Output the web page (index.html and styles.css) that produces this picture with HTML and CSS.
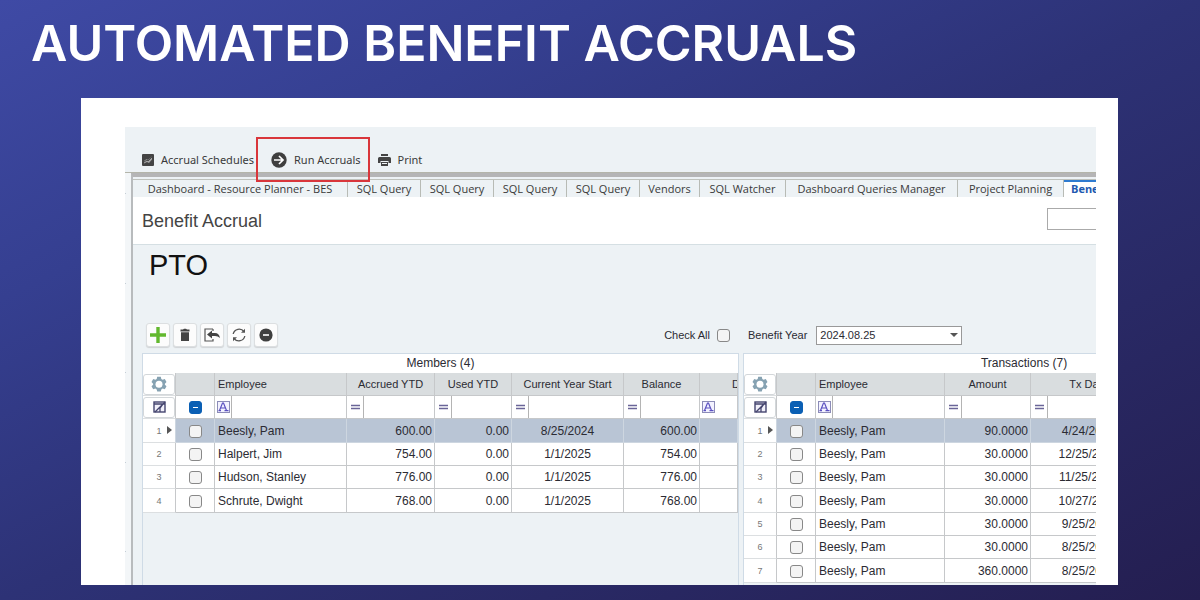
FILE: index.html
```
<!DOCTYPE html>
<html lang="en">
<head>
    <meta charset="UTF-8">
    <meta name="viewport" content="width=device-width, initial-scale=1.0">
    <title>Automated Benefit Accruals</title>
    <link rel="stylesheet" href="styles.css">
</head>
<body>
    <!-- shared icons -->
    <svg class="sprite" aria-hidden="true">
        <symbol id="gear" viewBox="0 0 16 16">
            <path d="M6.2 0.8h3.6l.5 2.2 1.3.8 2.2-.7 1.7 3-1.6 1.6v1l1.6 1.6-1.7 3-2.2-.7-1.3.8-.5 2.1H6.2l-.5-2.1-1.3-.8-2.2.7-1.7-3 1.6-1.6v-1L.5 6.1l1.700-3 2.200.7 1.300-.8z" fill="#86a2b2"/>
            <circle cx="8" cy="8.200" r="3.500" fill="#fff"/>
        </symbol>
        <symbol id="filter-edit" viewBox="0 0 13 12">
            <rect x="1" y="1" width="11" height="10" fill="#f1f0fa" stroke="#45456f" stroke-width="1.400"/>
            <path d="M1 3h11M3 3l7 0-3 4v4M2 11L12 1" fill="none" stroke="#45456f" stroke-width="1.300"/>
        </symbol>
        <symbol id="contains" viewBox="0 0 13 12">
            <rect x=".5" y=".5" width="12" height="11" fill="#f3f2ff" stroke="#8c8cb8"/>
            <path d="M2.500 9.500L5.500 2h1L9.500 9.500M4 7h4.200M1.500 9.700h2.500M7.500 9.700h4" fill="none" stroke="#5a50c0" stroke-width="1.200"/>
        </symbol>
        <symbol id="equals" viewBox="0 0 9 6">
            <path d="M0 1.500h9M0 4.500h9" stroke="#6a6598" stroke-width="1.300"/>
        </symbol>
    </svg>

    <h1 class="title">AUTOMATED BENEFIT ACCRUALS</h1>

    <div class="card">
        <div class="app">
            <div class="toolbar">
                <button class="tool">
                    <svg width="12" height="12" viewBox="0 0 12 12"><rect width="12" height="12" rx="1" fill="#444"/><path d="M2 9.500V7l2.500-2 1.500 1 4-3.500v3L7 9 5 8z" fill="#a5a5a5"/><path d="M2 8l3-2 1 1 4-4" fill="none" stroke="#333" stroke-width=".8"/></svg>
                    Accrual Schedules
                </button>
                <button class="tool tool-run">
                    <svg width="16" height="16" viewBox="0 0 16 16"><circle cx="8" cy="8" r="7.700" fill="#3f3f3f"/><path d="M3 8h9M8 4l4 4-4 4" fill="none" stroke="#fff" stroke-width="1.700"/></svg>
                    Run Accruals
                </button>
                <button class="tool">
                    <svg width="13" height="12" viewBox="0 0 13 12"><path d="M3 0h7v2H3zM1.500 3h10Q13 3 13 4.500V9h-2.500V7h-8v2H0V4.500Q0 3 1.500 3z" fill="#444"/><path d="M3 8h7v4H3z" fill="#444"/><path d="M4 9.500h5" stroke="#eef2f5"/></svg>
                    Print
                </button>
            </div>

            <div class="workspace">
                <div class="side"><i></i><i></i><i></i><i></i><i></i></div>
                <main class="main">
                    <nav class="tabs">
                        <a href="#">Dashboard - Resource Planner - BES</a>
                        <a href="#">SQL Query</a>
                        <a href="#">SQL Query</a>
                        <a href="#">SQL Query</a>
                        <a href="#">SQL Query</a>
                        <a href="#">Vendors</a>
                        <a href="#">SQL Watcher</a>
                        <a href="#">Dashboard Queries Manager</a>
                        <a href="#">Project Planning</a>
                        <a href="#" class="active">Benefit Accrual</a>
                    </nav>

                    <div class="page-head">
                        <h2>Benefit Accrual</h2>
                        <input type="text" class="search" aria-label="Search">
                    </div>

                    <div class="content">
                        <h3>PTO</h3>

                        <div class="columns">
                            <section class="column">
                                <div class="controls">
                                    <button class="icon-btn" aria-label="Add"><svg width="16" height="16" viewBox="0 0 16 16"><path d="M8 0v16M0 8h16" stroke="#62b82e" stroke-width="3.400"/></svg></button>
                                    <button class="icon-btn" aria-label="Delete"><svg width="12" height="14" viewBox="0 0 12 14"><path d="M1.500 1.500h2.500l1-.8h2l1 .8h2.500v2h-9zM2 4.200h8V13H2z" fill="#444"/></svg></button>
                                    <button class="icon-btn" aria-label="Revert"><svg width="16" height="14" viewBox="0 0 16 14"><path d="M9 1H1v12h8v-2M9 1v2" fill="none" stroke="#555" stroke-width="1.200"/><path d="M3 6.500L8 2.500V5h3q4 0 5 5-2-2-5-2H8v2.500z" fill="#444"/></svg></button>
                                    <button class="icon-btn" aria-label="Refresh"><svg width="14" height="14" viewBox="0 0 14 14"><path d="M1.200 6A6 6 0 0 1 12 3.700M12.800 8A6 6 0 0 1 2 10.300" fill="none" stroke="#555" stroke-width="1.300"/><path d="M13 .8v4H9zM1 13.200v-4h4z" fill="#555"/></svg></button>
                                    <button class="icon-btn" aria-label="Exclude"><svg width="14" height="14" viewBox="0 0 14 14"><circle cx="7" cy="7" r="6.600" fill="#3f3f3f"/><path d="M4 7h6" stroke="#fff" stroke-width="1.600"/></svg></button>
                                    <label class="check-all">Check All <input type="checkbox" class="check"></label>
                                </div>
                                <div class="panel">
                                    <table class="grid members">
                                        <caption>Members (4)</caption>
                                        <colgroup><col class="c-num"><col class="c-check"><col class="c-employee"><col class="c-accrued"><col class="c-used"><col class="c-start"><col class="c-balance"><col></colgroup>
                                        <thead>
                                            <tr class="head"><th class="num"><button class="cell-btn" aria-label="Settings"><svg width="16" height="16"><use href="#gear"/></svg></button></th><th></th><th class="left">Employee</th><th>Accrued YTD</th><th>Used YTD</th><th>Current Year Start</th><th>Balance</th><th class="cut">D</th></tr>
                                            <tr class="filter"><td class="num"><button class="cell-btn" aria-label="Edit filter"><svg width="13" height="12"><use href="#filter-edit"/></svg></button></td><td class="center"><input type="checkbox" class="check partial" aria-label="Select all members"></td>
                                                <td><div class="field text"><svg width="13" height="12"><use href="#contains"/></svg><input type="text" aria-label="Filter employee"></div></td>
                                                <td><div class="field"><svg width="9" height="6"><use href="#equals"/></svg><input type="text" aria-label="Filter accrued"></div></td>
                                                <td><div class="field"><svg width="9" height="6"><use href="#equals"/></svg><input type="text" aria-label="Filter used"></div></td>
                                                <td><div class="field"><svg width="9" height="6"><use href="#equals"/></svg><input type="text" aria-label="Filter year start"></div></td>
                                                <td><div class="field"><svg width="9" height="6"><use href="#equals"/></svg><input type="text" aria-label="Filter balance"></div></td>
                                                <td><div class="field text"><svg width="13" height="12"><use href="#contains"/></svg></div></td></tr>
                                        </thead>
                                        <tbody>
                                            <tr class="selected"><td class="num current">1</td><td class="center"><input type="checkbox" class="check" aria-label="Beesly, Pam"></td><td>Beesly, Pam</td><td class="right">600.00</td><td class="right">0.00</td><td class="center">8/25/2024</td><td class="right">600.00</td><td></td></tr>
                                            <tr><td class="num">2</td><td class="center"><input type="checkbox" class="check" aria-label="Halpert, Jim"></td><td>Halpert, Jim</td><td class="right">754.00</td><td class="right">0.00</td><td class="center">1/1/2025</td><td class="right">754.00</td><td></td></tr>
                                            <tr><td class="num">3</td><td class="center"><input type="checkbox" class="check" aria-label="Hudson, Stanley"></td><td>Hudson, Stanley</td><td class="right">776.00</td><td class="right">0.00</td><td class="center">1/1/2025</td><td class="right">776.00</td><td></td></tr>
                                            <tr><td class="num">4</td><td class="center"><input type="checkbox" class="check" aria-label="Schrute, Dwight"></td><td>Schrute, Dwight</td><td class="right">768.00</td><td class="right">0.00</td><td class="center">1/1/2025</td><td class="right">768.00</td><td></td></tr>
                                        </tbody>
                                    </table>
                                </div>
                            </section>

                            <section class="column">
                                <div class="controls">
                                    <label for="year">Benefit Year</label>
                                    <div class="select">
                                        <select id="year"><option>2024.08.25</option></select>
                                    </div>
                                </div>
                                <div class="panel panel-open">
                                    <table class="grid transactions">
                                        <caption>Transactions (7)</caption>
                                        <colgroup><col class="c-num"><col class="c-check"><col class="c-name"><col class="c-amount"><col class="c-date"><col></colgroup>
                                        <thead>
                                            <tr class="head"><th class="num"><button class="cell-btn" aria-label="Settings"><svg width="16" height="16"><use href="#gear"/></svg></button></th><th></th><th class="left">Employee</th><th>Amount</th><th>Tx Date</th><th></th></tr>
                                            <tr class="filter"><td class="num"><button class="cell-btn" aria-label="Edit filter"><svg width="13" height="12"><use href="#filter-edit"/></svg></button></td><td class="center"><input type="checkbox" class="check partial" aria-label="Select all transactions"></td>
                                                <td><div class="field text"><svg width="13" height="12"><use href="#contains"/></svg><input type="text" aria-label="Filter employee"></div></td>
                                                <td><div class="field"><svg width="9" height="6"><use href="#equals"/></svg><input type="text" aria-label="Filter amount"></div></td>
                                                <td><div class="field"><svg width="9" height="6"><use href="#equals"/></svg><input type="text" aria-label="Filter date"></div></td>
                                                <td></td></tr>
                                        </thead>
                                        <tbody>
                                            <tr class="selected"><td class="num current">1</td><td class="center"><input type="checkbox" class="check" aria-label="Row 1"></td><td>Beesly, Pam</td><td class="right">90.0000</td><td class="center">4/24/2024</td><td></td></tr>
                                            <tr><td class="num">2</td><td class="center"><input type="checkbox" class="check" aria-label="Row 2"></td><td>Beesly, Pam</td><td class="right">30.0000</td><td class="center">12/25/2024</td><td></td></tr>
                                            <tr><td class="num">3</td><td class="center"><input type="checkbox" class="check" aria-label="Row 3"></td><td>Beesly, Pam</td><td class="right">30.0000</td><td class="center">11/25/2024</td><td></td></tr>
                                            <tr><td class="num">4</td><td class="center"><input type="checkbox" class="check" aria-label="Row 4"></td><td>Beesly, Pam</td><td class="right">30.0000</td><td class="center">10/27/2024</td><td></td></tr>
                                            <tr><td class="num">5</td><td class="center"><input type="checkbox" class="check" aria-label="Row 5"></td><td>Beesly, Pam</td><td class="right">30.0000</td><td class="center">9/25/2024</td><td></td></tr>
                                            <tr><td class="num">6</td><td class="center"><input type="checkbox" class="check" aria-label="Row 6"></td><td>Beesly, Pam</td><td class="right">30.0000</td><td class="center">8/25/2024</td><td></td></tr>
                                            <tr><td class="num">7</td><td class="center"><input type="checkbox" class="check" aria-label="Row 7"></td><td>Beesly, Pam</td><td class="right">360.0000</td><td class="center">8/25/2024</td><td></td></tr>
                                        </tbody>
                                    </table>
                                </div>
                            </section>
                        </div>
                    </div>
                </main>
            </div>
        </div>
    </div>
</body>
</html>
```
FILE: styles.css
```
* {
    box-sizing: border-box;
}
body {
    margin: 0;
    min-height: 100vh;
    padding: 13px 82px 15px 81px;
    background: linear-gradient(to bottom right, #3f4aa5 0%, #353f90 25%, #2d3276 50%, #241e50 100%);
    font-family: "Liberation Sans", Arial, sans-serif;
    font-size: 12px;
    color: #2b2b33;
}
h1, h2, h3 {
    margin: 0;
    font-weight: normal;
}
button, input, select {
    font: inherit;
    color: inherit;
}
svg {
    display: block;
    flex: none;
}
.sprite {
    position: absolute;
    width: 0;
    height: 0;
}
.title {
    margin: 0 0 25px -50px;
    font-family: Inter, sans-serif;
    font-size: 50px;
    font-weight: 600;
    line-height: 60px;
    color: #fff;
    white-space: nowrap;
}
.card {
    padding: 29px 22px 0 44px;
    background: #fff;
}
.app {
    overflow: hidden;
    background: #edf2f5;
}

/* toolbar */
.toolbar {
    display: flex;
    align-items: center;
    gap: 17px;
    height: 45px;
    padding: 20px 0 0 17px;
}
.tool {
    position: relative;
    display: flex;
    align-items: center;
    gap: 7px;
    padding: 0;
    border: 0;
    background: none;
    font-family: "Noto Sans", sans-serif;
    font-size: 11px;
    line-height: 16px;
    color: #3a3a3a;
    white-space: nowrap;
}
.tool-run::after {
    content: "";
    position: absolute;
    inset: -15px -9px -14px -15px;
    border: 2px solid #d9363b;
    z-index: 1;
}

/* workspace */
.workspace {
    display: flex;
    border-top: 1px solid #b4b5aa;
}
.side {
    display: flex;
    flex: 0 0 6px;
    flex-direction: column;
    justify-content: space-between;
    padding: 20px 5px 33px 0;
    background: #f3f6f8;
}
.side i {
    height: 1px;
    background: #c5ced6;
}
.main {
    flex: 1;
    min-width: 0;
    border-top: 4px solid #b5b5b6;
    border-left: 2px solid #b8bbbd;
}
.tabs {
    display: grid;
    grid-template-columns: 215px repeat(4, 73px) 60px 86px 172px 106px 120px;
    margin-top: 2px;
    border-top: 1px solid #bfc2bc;
}
.tabs a {
    height: 17px;
    border-right: 1px solid #b8bbb5;
    font-family: "Open Sans", sans-serif;
    font-size: 11px;
    line-height: 17px;
    text-align: center;
    text-decoration: none;
    white-space: nowrap;
    color: #3a3a3a;
}
.tabs .active {
    padding-left: 7px;
    border-top: 2px solid #2f7bd0;
    background: #fff;
    font-weight: bold;
    line-height: 14px;
    text-align: left;
    color: #2159b0;
}
.page-head {
    display: flex;
    align-items: center;
    justify-content: space-between;
    height: 48px;
    padding: 1px 0 0 9px;
    border-bottom: 1px solid #d5dfe3;
    background: #fff;
}
.page-head h2 {
    font-size: 18px;
    color: #444;
}
.search {
    width: 49px;
    height: 22px;
    margin-bottom: 4px;
    border: 1px solid #aaa;
    border-right: 0;
    background: #fff;
}
.content {
    padding-left: 9px;
}
.content h3 {
    padding: 3px 0 0 7px;
    font-size: 29px;
    line-height: 34px;
    color: #111;
}
.columns {
    display: grid;
    grid-template-columns: 597fr 353fr;
    gap: 4px;
    margin-top: 41px;
}
.column {
    display: flex;
    flex-direction: column;
    min-width: 0;
}
.controls {
    display: flex;
    align-items: center;
    gap: 3px;
    height: 24px;
    margin-bottom: 6px;
    padding-left: 4px;
    font-size: 11px;
    white-space: nowrap;
}
.icon-btn {
    display: grid;
    place-items: center;
    width: 24px;
    height: 24px;
    padding: 0;
    border: 1px solid #dcdfe1;
    border-radius: 3px;
    background: #fcfcfc;
    box-shadow: 0 1px 1px #d0d3d6;
}
.check-all {
    display: flex;
    align-items: center;
    gap: 7px;
    margin-left: auto;
    padding-right: 9px;
}
.controls label[for] {
    padding-left: 1px;
}
.select {
    position: relative;
    margin-left: 6px;
}
.select::after {
    content: "";
    position: absolute;
    top: 7px;
    right: 4px;
    border: 4px solid transparent;
    border-top-color: #555;
    pointer-events: none;
}
.select select {
    display: block;
    width: 146px;
    height: 19px;
    padding: 0 3px;
    border: 1px solid #999;
    border-radius: 0;
    background: #fff;
    appearance: none;
}

/* grids */
.panel {
    flex: 1;
    overflow: hidden;
    padding-bottom: 2px;
    border: 1px solid #cfdbe6;
    border-bottom: 0;
}
.panel-open {
    border-right: 0;
}
.grid {
    width: 100%;
    table-layout: fixed;
    border-collapse: separate;
    border-spacing: 0;
}
.grid.transactions {
    width: 560px;
}
.c-num { width: 33px; }
.c-check { width: 39px; }
.c-employee { width: 132px; }
.c-accrued { width: 88px; }
.c-used { width: 77px; }
.c-start { width: 112px; }
.c-balance { width: 76px; }
.c-name { width: 129px; }
.c-amount { width: 86px; }
.c-date { width: 116px; }
.grid caption {
    height: 19px;
    background: #fff;
    font-size: 12px;
    line-height: 19px;
}
.grid th, .grid td {
    height: 23px;
    padding: 0 3px;
    overflow: hidden;
    border-right: 1px solid #c6c8ca;
    border-bottom: 1px solid #c6c8ca;
    background: #fff;
    line-height: 16px;
    white-space: nowrap;
}
.grid tbody tr:nth-child(3n+1) td {
    height: 24px;
}
.grid .head th {
    background: #d9dddf;
    font-size: 11px;
    font-weight: normal;
    text-align: center;
}
.grid .head .left {
    text-align: left;
}
.grid .head .cut {
    padding-left: 32px;
    text-align: left;
}
.grid .right {
    padding-right: 2px;
    text-align: right;
}
.grid .center {
    text-align: center;
}
.grid .selected td {
    border-color: #cdd6e0;
    background: #b9c5d5;
}
.grid td.num, .grid th.num {
    position: relative;
    padding: 0;
    border-bottom-color: #dcdfe1;
    background: #fff;
    font-size: 9px;
    text-align: center;
    color: #777;
}
.grid .current::after {
    content: "";
    position: absolute;
    top: 7px;
    right: 3px;
    border: 4px solid transparent;
    border-right: 0;
    border-left: 5px solid #555;
}
.cell-btn {
    display: grid;
    place-items: center;
    width: 32px;
    height: 21px;
    padding: 0;
    border: 1px solid #d3d7da;
    border-radius: 3px;
    background: #fff;
}
.grid .filter td:not(.num):not(.center) {
    padding: 0;
}
.field {
    display: flex;
    align-items: center;
    height: 22px;
    padding-left: 4px;
}
.field.text {
    padding-left: 2px;
}
.field input {
    flex: 1;
    width: 0;
    height: 22px;
    margin-left: 3px;
    padding: 0 2px;
    border: 0;
    border-left: 1px solid #b4b4b4;
    background: #fff;
}
.field.text input {
    margin-left: 1px;
}
.check {
    display: inline-block;
    width: 13px;
    height: 13px;
    margin: 0;
    border: 1px solid #888;
    border-radius: 3px;
    background: #f4f4f4;
    vertical-align: middle;
    appearance: none;
}
.partial {
    border-color: #0a5fb4;
    background: linear-gradient(#fff, #fff) center / 5px 1px no-repeat #0a5fb4;
}
```
